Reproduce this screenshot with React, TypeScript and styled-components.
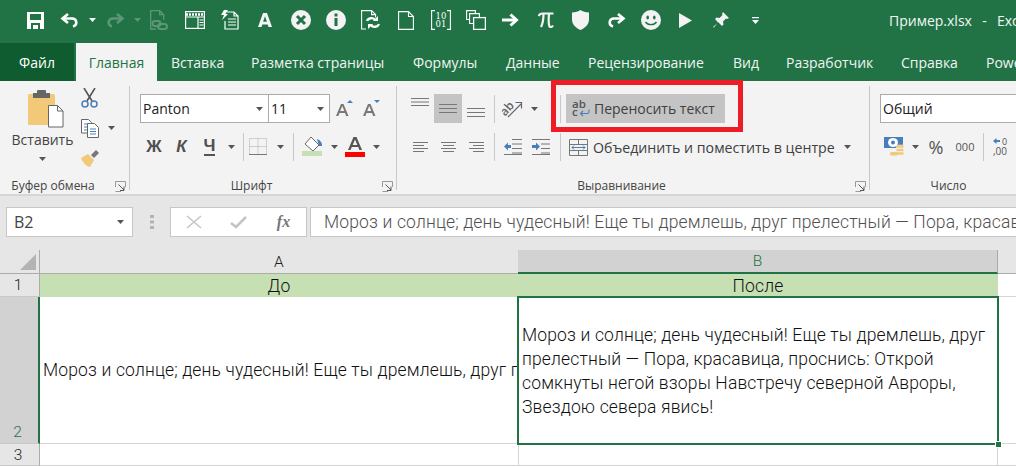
import styled, { createGlobalStyle } from 'styled-components';

const Reset = createGlobalStyle`
  html, body {
    margin: 0;
    width: 1016px;
    height: 466px;
    overflow: hidden;
    background: #fff;
    font-family: 'Open Sans', 'Liberation Sans', sans-serif;
  }
  * { box-sizing: border-box; }
`;

const GREEN = '#217346';
const BLUE = '#4a7ebb';
const TAN = '#f2c879';

const Page = styled.div`
  width: 1016px;
  height: 466px;
  overflow: hidden;
  display: flex;
  flex-direction: column;
  position: relative;
`;

const TitleBar = styled.div`
  height: 43px;
  flex: none;
  background: ${GREEN};
  display: flex;
  align-items: center;
  padding: 0 0 3px 18px;
  color: #fff;
`;

const QatBtn = styled.div<{ $w?: number; $dim?: boolean }>`
  width: ${(p) => p.$w ?? 35}px;
  height: 30px;
  flex: none;
  display: flex;
  align-items: center;
  justify-content: center;
  opacity: ${(p) => (p.$dim ? 0.26 : 1)};
`;

const FileName = styled.div`
  margin-left: 116px;
  flex: none;
  font-size: 14px;
  word-spacing: 1.5px;
  white-space: pre;
  color: #f2f7f4;
`;

const TabBar = styled.div`
  height: 38px;
  flex: none;
  background: ${GREEN};
  display: flex;
  overflow: hidden;
`;

const FileTab = styled.div`
  width: 74px;
  margin-right: 2px;
  background: #0e5c2f;
  color: #fff;
  font-size: 14px;
  display: flex;
  align-items: center;
  justify-content: center;
  flex: none;
`;

const ActiveTab = styled.div`
  width: 81px;
  background: #f3f3f3;
  color: ${GREEN};
  font-size: 14px;
  display: flex;
  align-items: center;
  justify-content: center;
  flex: none;
`;

const Tab = styled.div<{ $w: number }>`
  width: ${(p) => p.$w}px;
  flex: none;
  padding-left: 14px;
  color: #f0f5f2;
  font-size: 14px;
  display: flex;
  align-items: center;
  white-space: nowrap;
`;

const Ribbon = styled.div`
  height: 115px;
  flex: none;
  background: #f3f3f3;
  border-bottom: 2px solid #d6d6d6;
  display: flex;
  overflow: hidden;
  padding-top: 5px;
`;

const Group = styled.div<{ $w: number; $last?: boolean }>`
  width: ${(p) => p.$w}px;
  flex: none;
  height: 104px;
  display: flex;
  flex-direction: column;
  border-right: ${(p) => (p.$last ? 'none' : '1px solid #c8c8c8')};
`;

const GroupBody = styled.div<{ $left: number }>`
  flex: 1;
  display: flex;
  flex-direction: column;
  gap: 9px;
  padding: 8px 0 0 ${(p) => p.$left}px;
  min-height: 0;
`;

const GroupLabel = styled.div`
  height: 12px;
  margin-bottom: -2px;
  display: grid;
  grid-template-columns: 1fr auto 1fr;
  align-items: center;
  color: #444;
  font-size: 12px;
  line-height: 12px;
  white-space: nowrap;
  padding-right: 23px;
  svg { justify-self: end; grid-column: 3; margin-right: -20px; }
`;

const LabelText = styled.span`
  grid-column: 2;
`;

const Row = styled.div`
  height: 29px;
  display: flex;
  align-items: center;
  flex: none;
`;

const ClipboardBody = styled.div`
  flex: 1;
  display: flex;
  padding-left: 12px;
`;

const PasteCol = styled.div`
  width: 61px;
  display: flex;
  flex-direction: column;
  align-items: center;
  padding-top: 4px;
  color: #444;
  font-size: 14px;
  svg:first-child { margin-left: 7px; }
`;

const PasteLabel = styled.div`
  margin: 3px 0 8px;
  line-height: 18px;
`;

const SmallCol = styled.div`
  margin-left: 8px;
  padding-top: 2px;
  display: flex;
  flex-direction: column;
  gap: 10px;
`;

const SmallRow = styled.div`
  height: 20px;
  display: flex;
  align-items: center;
  gap: 9px;
`;

const Select = styled.div<{ $w: number; $overlap?: boolean }>`
  width: ${(p) => p.$w}px;
  height: 29px;
  flex: none;
  margin-left: ${(p) => (p.$overlap ? -1 : 0)}px;
  background: #fff;
  border: 1px solid #ababab;
  display: flex;
  align-items: center;
  justify-content: space-between;
  padding: 0 5px 0 2px;
  color: #222;
  font-size: 14px;
`;

const Tool = styled.div<{ $w: number; $on?: boolean; $up?: number; $down?: number }>`
  width: ${(p) => p.$w}px;
  height: 29px;
  flex: none;
  display: flex;
  align-items: center;
  justify-content: center;
  padding-bottom: ${(p) => p.$up ?? 0}px;
  padding-top: ${(p) => p.$down ?? 0}px;
  background: ${(p) => (p.$on ? '#c4c4c4' : 'transparent')};
  color: #555;
`;

const StyleLetter = styled.span<{ $italic?: boolean; $under?: boolean }>`
  font-family: 'Liberation Sans', sans-serif;
  font-weight: 700;
  font-size: 17px;
  font-style: ${(p) => (p.$italic ? 'italic' : 'normal')};
  border-bottom: ${(p) => (p.$under ? '2px solid #555' : 'none')};
  line-height: ${(p) => (p.$under ? '17px' : '20px')};
  color: #505050;
`;

const RibbonSep = styled.div<{ $before?: number }>`
  width: 1px;
  height: 28px;
  flex: none;
  margin-left: ${(p) => p.$before ?? 0}px;
  background: #c8c8c8;
`;

const WrapButton = styled.div`
  width: 159px;
  height: 29px;
  flex: none;
  margin-left: 5px;
  padding-left: 6px;
  background: #c4c4c4;
  display: flex;
  align-items: center;
  gap: 4px;
  color: #404040;
  font-size: 14px;
  white-space: nowrap;
`;

const MergeButton = styled.div`
  width: 290px;
  height: 29px;
  flex: none;
  margin-left: 5px;
  padding: 1px 5px 0 3px;
  display: flex;
  align-items: center;
  gap: 5px;
  color: #404040;
  font-size: 14.2px;
  white-space: nowrap;
  svg:last-child { margin-left: auto; }
`;

const Thousands = styled.span`
  font-size: 11px;
  color: #555;
`;

const Percent = styled.span`
  font-size: 18px;
  color: #555;
`;

const Highlight = styled.div`
  position: absolute;
  left: 551px;
  top: 80px;
  width: 192px;
  height: 52px;
  border: 5px solid #ee1c25;
  pointer-events: none;
`;

const FormulaBar = styled.div`
  height: 54px;
  flex: none;
  background: #e6e6e6;
  display: flex;
  padding: 11px 0 0 6px;
  overflow: hidden;
`;

const NameBox = styled.div`
  width: 127px;
  height: 30px;
  flex: none;
  background: #fff;
  border: 1px solid #c6c6c6;
  display: flex;
  align-items: center;
  justify-content: space-between;
  padding: 0 8px 0 7px;
  color: #444;
  font-size: 16px;
`;

const Grip = styled.div`
  width: 37px;
  height: 30px;
  flex: none;
  display: flex;
  align-items: center;
  justify-content: center;
`;

const FormulaButtons = styled.div`
  width: 137px;
  height: 30px;
  flex: none;
  background: #fff;
  border: 1px solid #c6c6c6;
  display: flex;
  align-items: center;
`;

const FxCell = styled.div`
  width: 45px;
  display: flex;
  justify-content: center;
  align-items: center;
  font-family: 'Liberation Serif', serif;
  font-style: italic;
  font-weight: 700;
  font-size: 16px;
  color: #777;
`;

const FormulaTools = styled.div`
  width: 45px;
  display: flex;
  align-items: center;
  justify-content: center;
`;

const FormulaInput = styled.div`
  flex: 1;
  min-width: 0;
  height: 30px;
  margin-left: 3px;
  background: #fff;
  border: 1px solid #c6c6c6;
  border-right: none;
  padding-left: 13px;
  display: flex;
  align-items: center;
  overflow: hidden;
  white-space: nowrap;
  color: #505050;
  font-family: 'Roboto', sans-serif;
  font-weight: 300;
  font-size: 17.5px;
  letter-spacing: 0.15px;
`;

const Sheet = styled.div`
  flex: 1;
  display: grid;
  grid-template-columns: 40px 478px 480px 18px;
  grid-template-rows: 24px 23px 147px 22px;
  font-family: 'Roboto', sans-serif;
  font-weight: 300;
  font-size: 17.5px;
  letter-spacing: 0.15px;
  color: #111;
`;

const Corner = styled.div`
  background: #e6e6e6;
  border-right: 1px solid #ababab;
  border-bottom: 1px solid #ababab;
  padding: 4px 0 0 20px;
`;

const ColHead = styled.div<{ $active?: boolean }>`
  background: ${(p) => (p.$active ? '#d2d2d2' : '#e6e6e6')};
  color: ${(p) => (p.$active ? GREEN : '#222')};
  border-bottom: ${(p) => (p.$active ? `2px solid ${GREEN}` : '1px solid #ababab')};
  border-right: ${(p) => (p.$active ? '1px solid #ababab' : 'none')};
  display: flex;
  align-items: center;
  justify-content: center;
  font-size: 15.5px;
`;

const RowHead = styled.div<{ $active?: boolean }>`
  background: ${(p) => (p.$active ? '#d2d2d2' : '#e6e6e6')};
  color: ${(p) => (p.$active ? GREEN : '#222')};
  border-right: ${(p) => (p.$active ? `2px solid ${GREEN}` : '1px solid #ababab')};
  border-bottom: 1px solid #c8c8c8;
  display: flex;
  align-items: ${(p) => (p.$active ? 'flex-end' : 'center')};
  justify-content: center;
  padding-right: 3px;
  font-size: 15.5px;
  line-height: 22px;
`;

const TitleCell = styled.div`
  background: #c6e0b4;
  display: flex;
  align-items: center;
  justify-content: center;
  overflow: hidden;
`;

const Cell = styled.div<{ $left?: boolean; $right?: boolean }>`
  background: #fff;
  border-bottom: 1px solid #d4d4d4;
  border-left: ${(p) => (p.$left ? '1px solid #d4d4d4' : 'none')};
  border-right: ${(p) => (p.$right ? '1px solid #d4d4d4' : 'none')};
  display: flex;
  align-items: center;
  padding-left: 3px;
  overflow: hidden;
  white-space: nowrap;
`;

const SelectedCell = styled.div`
  position: relative;
  z-index: 1;
  background: #fff;
  outline: 2px solid ${GREEN};
  outline-offset: -1px;
  display: flex;
  align-items: center;
  padding: 0 4px;
  line-height: 24px;
`;

const FillHandle = styled.div`
  position: absolute;
  right: -4px;
  bottom: -4px;
  width: 7px;
  height: 7px;
  background: ${GREEN};
  border: 1px solid #fff;
`;

const Caret = ({ color = '#555' }: { color?: string }) => (
  <svg width="7" height="4" viewBox="0 0 7 4"><path d="M0 0h7L3.5 4z" fill={color} /></svg>
);

const Launcher = () => (
  <svg width="11" height="11" viewBox="0 0 11 11" fill="none">
    <path d="M.5 6V.5H10.5V6M.5 10.500H6" stroke="#999" />
    <path d="M3.500 3.500 9 9M9 5.500V9.500H5" stroke="#555" />
  </svg>
);

const SaveIcon = () => (
  <svg width="17" height="17" viewBox="0 0 17 17">
    <path fillRule="evenodd" fill="#fff" d="M0 0h17v17H0zM3 2v6h11V2zM4 11v6h2v-4h5v4h2v-6z" />
  </svg>
);

const UndoIcon = ({ flip }: { flip?: boolean }) => (
  <svg width="20" height="15" viewBox="0 0 20 15" fill="none" stroke="#fff" strokeWidth="2.6" style={flip ? { transform: 'scaleX(-1)' } : undefined}>
    <path d="M8 1 2.500 5.500 8 10" />
    <path d="M3 5.500h9c5 0 6 6.500 1 8" />
  </svg>
);

const LinkDocIcon = () => (
  <svg width="19" height="20" viewBox="0 0 19 20" fill="none" stroke="#fff" strokeWidth="1.3">
    <path d="M6 19H.7V.7h9l4 4v5M9.700.7v4h4" />
    <rect x="2.500" y="11" width="8" height="5" rx="2.500" strokeWidth="2" />
    <rect x="8" y="14" width="9" height="5" rx="2.500" strokeWidth="2" />
  </svg>
);

const WindowIcon = () => (
  <svg width="20" height="18" viewBox="0 0 20 18" fill="none" stroke="#fff" strokeWidth="1.2">
    <rect x=".6" y=".6" width="18.800" height="16.800" />
    <path d="M1 3.500h18" strokeWidth="2.500" strokeDasharray="2 1" />
    <path d="M1 6h18M13 6.500v11M14.500 9h4M14.500 11.500h4M14.500 14h4" />
  </svg>
);

const QuickDocIcon = () => (
  <svg width="18" height="20" viewBox="0 0 18 20" fill="none" stroke="#fff" strokeWidth="1.2">
    <path d="M6 2h7l4 4v13H4v-8M13 2v4h4M7 9h8M7 12h8M7 15h8" />
    <path d="M3 0h4L4.500 4H7L1 10l2-5H0z" fill="#fff" stroke="none" />
  </svg>
);

const CircleX = () => (
  <svg width="20" height="20" viewBox="0 0 20 20">
    <circle cx="10" cy="10" r="10" fill="#f3f3f3" />
    <path d="M6 6l8 8M14 6l-8 8" stroke={GREEN} strokeWidth="3" />
  </svg>
);

const CircleInfo = () => (
  <svg width="20" height="20" viewBox="0 0 20 20">
    <circle cx="10" cy="10" r="10" fill="#f3f3f3" />
    <rect x="8.500" y="8" width="3" height="8" fill={GREEN} />
    <rect x="8.500" y="3.500" width="3" height="3" fill={GREEN} />
  </svg>
);

const RefreshDocIcon = () => (
  <svg width="19" height="20" viewBox="0 0 19 20" fill="none" stroke="#fff" strokeWidth="1.1">
    <path d="M5 19H.6V.6h10l4 4v3M10.600.6v4h4" />
    <path d="M6 11c1-3 6-4 8-1M18 14c-1 3-6 4-8 1" strokeWidth="2.300" />
    <path d="M12 11h5V6zM12 14H7v5z" fill="#fff" stroke="none" />
  </svg>
);

const BlankDocIcon = () => (
  <svg width="16" height="19" viewBox="0 0 16 19" fill="none" stroke="#fff" strokeWidth="1.1">
    <path d="M.6.600H10.500L15.400 5.500V18.400H.6zM10.500.6v4.900h4.900" />
  </svg>
);

const BinaryIcon = () => (
  <svg width="20" height="20" viewBox="0 0 20 20" fill="none">
    <path d="M4 .6H.6v18.800H4M16 .6h3.400v18.800H16" stroke="#fff" strokeWidth="1.1" />
    <text x="10" y="8.500" textAnchor="middle" fontSize="8.500" fill="#fff" fontFamily="'DejaVu Serif', serif">10</text>
    <text x="10" y="17" textAnchor="middle" fontSize="8.500" fill="#fff" fontFamily="'DejaVu Serif', serif">01</text>
  </svg>
);

const CopiesIcon = () => (
  <svg width="20" height="20" viewBox="0 0 20 20" fill="none" stroke="#fff" strokeWidth="1.1">
    <path d="M3 9.500H.6V.6h8.800V3" />
    <path d="M7 13.500H3.600V3.600h9.800V7" />
    <rect x="7.600" y="7.600" width="11.800" height="11.800" strokeWidth="1.300" />
  </svg>
);

const ArrowIcon = () => (
  <svg width="17" height="14" viewBox="0 0 17 14" fill="none" stroke="#fff">
    <path d="M0 7h14" strokeWidth="3" />
    <path d="M8.500 1.500 14.500 7l-6 5.500" strokeWidth="3" />
  </svg>
);

const ShieldIcon = () => (
  <svg width="17" height="20" viewBox="0 0 17 20">
    <path d="M8.500 0c2 1.500 5 2.500 8.500 2.500v7c0 5-4 8.500-8.500 10.500C4 18 0 14.500 0 9.500v-7C3.500 2.500 6.500 1.500 8.500 0z" fill="#f3f3f3" />
  </svg>
);

const SmileIcon = () => (
  <svg width="20" height="20" viewBox="0 0 20 20">
    <circle cx="10" cy="10" r="10" fill="#f3f3f3" />
    <ellipse cx="6.700" cy="7.500" rx="1.300" ry="2" fill={GREEN} />
    <ellipse cx="13.300" cy="7.500" rx="1.300" ry="2" fill={GREEN} />
    <path d="M4.500 12c2.500 3.500 8.500 3.500 11 0" fill="none" stroke={GREEN} strokeWidth="1.300" />
  </svg>
);

const PiIcon = () => (
  <svg width="16" height="16" viewBox="0 0 16 16" fill="none" stroke="#f3f3f3" strokeWidth="2.200">
    <path d="M.5 4c1-2 2-2.500 4-2.500H15.500" />
    <path d="M5.500 2C5.500 8 4.500 12 3 15M11 2c-.5 5-.5 10 .5 12.500 1 1 2.500.5 3.500-1" />
  </svg>
);

const PlayIcon = () => (
  <svg width="13" height="15" viewBox="0 0 13 15"><path d="M0 0l13 7.500L0 15z" fill="#f3f3f3" /></svg>
);

const PinIcon = () => (
  <svg width="16" height="16" viewBox="0 0 16 16" fill="#f3f3f3">
    <path d="M10 0l6 6-2 1-1-.5-3 3 .5 3-1.500 1.500L5 10 1 15.500 0 15l5-4.500L2 7l1.500-1.500 3 .5 3-3L9 2z" />
  </svg>
);

const QatMore = () => (
  <svg width="7" height="7" viewBox="0 0 7 7" fill="#fff"><path d="M0 0h7v1.300H0zM0 3h7L3.500 7z" /></svg>
);

const PasteIcon = () => (
  <svg width="36" height="38" viewBox="0 0 36 38">
    <rect x="0" y="4" width="27" height="31" rx="1.500" fill={TAN} />
    <rect x="9" y="0" width="9" height="4" rx="1" fill="#666" />
    <rect x="5" y="3" width="17" height="5" fill="#666" />
    <path d="M20.500 15.500h9l5.500 5.500v16H20.500z" fill="#fff" stroke="#666" />
    <path d="M29.500 15.500v5.500h5.500" fill="none" stroke="#666" />
  </svg>
);

const ScissorsIcon = () => (
  <svg width="17" height="20" viewBox="0 0 17 20" fill="none">
    <path d="M3 0 11 13M14 0 6 13" stroke="#555" strokeWidth="1.600" />
    <circle cx="4" cy="16" r="3" stroke={BLUE} strokeWidth="1.500" />
    <circle cx="13" cy="16" r="3" stroke={BLUE} strokeWidth="1.500" />
  </svg>
);

const CopyIcon = () => (
  <svg width="18" height="19" viewBox="0 0 18 19" fill="#fff" stroke="#666">
    <path d="M.5.500h7l3 3V14H.5z" />
    <path d="M6.500 4.500h7l4 4v10h-11z" />
    <path d="M3 5h4M3 8h3M3 11h3" stroke={BLUE} fill="none" />
    <path d="M9 10h6M9 12.500h6M9 15h6" stroke={BLUE} fill="none" />
  </svg>
);

const BrushIcon = () => (
  <svg width="18" height="17" viewBox="0 0 18 17">
    <path d="M0 8l7-4 6 6-4 7c-3 0-8-5-9-9z" fill={TAN} />
    <path d="M10 5l5-5 3 3-5 5z" fill="#777" />
  </svg>
);

const GrowIcon = ({ up }: { up?: boolean }) => (
  <svg width="18" height="17" viewBox="0 0 18 17">
    <path d="M1 16 6 4h2.500l5 12h-2.300l-1.200-3H4.500l-1.200 3zM5.200 11h4.100L7.250 6z" fill="#777" />
    <path d={up ? 'M12 3 15 0l3 3z' : 'M12 0h6l-3 3z'} fill={BLUE} />
  </svg>
);

const BordersIcon = () => (
  <svg width="18" height="17" viewBox="0 0 18 17" fill="none">
    <path d="M.5.500h17v16H.5zM9 .5v16M.5 8.500h17" stroke="#aaa" strokeDasharray="1 1" />
    <path d="M0 16.500h18" stroke="#777" />
  </svg>
);

const FillIcon = () => (
  <svg width="21" height="19" viewBox="0 0 21 19">
    <path d="M9 0l8 8-6 6-8-7z" fill="#fff" stroke="#666" />
    <path d="M15 2c3 1 5 3 5 7h-3z" fill={BLUE} />
    <rect x="0" y="14" width="20" height="5" fill="#c6e0b4" />
  </svg>
);

const FontColorIcon = () => (
  <svg width="20" height="20" viewBox="0 0 20 20">
    <path d="M3 13 8.500 0h3L17 13h-2.600l-1.200-3H6.800l-1.200 3zM7.700 8h4.600L10 2.500z" fill="#555" />
    <rect x="0" y="15" width="20" height="5" fill="#f00" />
  </svg>
);

const LinesIcon = ({ widths, align = 'center', step = 4 }: { widths: number[]; align?: 'left' | 'center' | 'right'; step?: number }) => {
  const max = Math.max(...widths);
  const h = (widths.length - 1) * step + 1;
  return (
    <svg width={max} height={h} viewBox={`0 0 ${max} ${h}`} stroke="#777">
      {widths.map((w, i) => {
        const x = align === 'left' ? 0 : align === 'right' ? max - w : (max - w) / 2;
        return <path key={i} d={`M${x} ${i * step + 0.5}h${w}`} />;
      })}
    </svg>
  );
};

const OrientationIcon = () => (
  <svg width="21" height="20" viewBox="0 0 21 20" fill="none">
    <text x="1" y="15" fontSize="12" fontWeight="600" fill="#666" transform="rotate(-48 5 14)" fontFamily="'Open Sans', sans-serif">ab</text>
    <path d="M6 18 19 5M13.500 3.500h6V9.500" stroke="#666" strokeWidth="1.200" />
  </svg>
);

const IndentIcon = ({ out }: { out?: boolean }) => (
  <svg width="18" height="16" viewBox="0 0 18 16" fill="none">
    <path d={out ? 'M8 .5h10M8 5h10M8 9.500h10M8 14h10M0 15.500h18' : 'M0 .5h18M9 5h9M9 9.500h9M9 14h9M0 15.500h18'} stroke="#777" />
    <path d={out ? 'M0 7.500l4-4v2.500h3v3H4v2.500z' : 'M8 7.500l-4-4v2.500H0v3h4v2.500z'} fill={BLUE} />
  </svg>
);

const WrapIcon = () => (
  <svg width="18" height="17" viewBox="0 0 18 17" fill="none">
    <text x="0" y="8" fontSize="11.500" fontWeight="600" fill="#555" fontFamily="'Open Sans', sans-serif">ab</text>
    <text x="0" y="16" fontSize="11.500" fontWeight="600" fill="#555" fontFamily="'Open Sans', sans-serif">c</text>
    <path d="M17 9.500v2.500c0 1-1 1.500-2 1.500H8.500M11 11l-2.500 2.500L11 16" stroke={BLUE} strokeWidth="1.100" />
  </svg>
);

const MergeIcon = () => (
  <svg width="19" height="17" viewBox="0 0 19 17" fill="none">
    <path d="M.5.500h18v16H.5zM.5 5.500h18M.5 11.500h18M9.500.5v5M9.500 11.500v5" stroke="#777" />
    <path d="M3 8.500h13M5 6.500l-2 2 2 2M14 6.500l2 2-2 2" stroke={BLUE} />
  </svg>
);

const MoneyIcon = () => (
  <svg width="20" height="20" viewBox="0 0 20 20">
    <rect width="19" height="11" fill={BLUE} />
    <ellipse cx="9" cy="5.500" rx="5" ry="4.500" fill="#fff" />
    <circle cx="9" cy="5.500" r="2" fill={BLUE} />
    <rect x="12" y="8" width="8" height="3" rx="1.500" fill={TAN} stroke="#f3f3f3" strokeWidth=".5" />
    <rect x="12" y="11.500" width="8" height="3" rx="1.500" fill={TAN} stroke="#f3f3f3" strokeWidth=".5" />
    <rect x="12" y="15" width="8" height="3" rx="1.500" fill={TAN} stroke="#f3f3f3" strokeWidth=".5" />
    <rect x="6" y="15" width="8" height="3.500" rx="1.500" fill={TAN} />
  </svg>
);

const DecimalIcon = () => (
  <svg width="18" height="19" viewBox="0 0 18 19" fill="none">
    <path d="M0 4l3.500-3v2H7v2H3.500v2z" fill={BLUE} />
    <text x="9" y="8" fontSize="9" fill="#555" fontFamily="'Open Sans', sans-serif">0</text>
    <text x="0" y="18" fontSize="10" fill="#555" fontFamily="'Open Sans', sans-serif">,00</text>
  </svg>
);

const CrossIcon = () => (
  <svg width="16" height="14" viewBox="0 0 16 14" stroke="#c4c4c4" strokeWidth="1.500"><path d="M1 1l14 12M15 1 1 13" /></svg>
);

const CheckIcon = () => (
  <svg width="17" height="13" viewBox="0 0 17 13" fill="none" stroke="#c4c4c4" strokeWidth="2.500"><path d="M1 7l5 4L16 1" /></svg>
);

const GripIcon = () => (
  <svg width="4" height="14" viewBox="0 0 4 14" fill="#b4b4b4">
    <rect width="4" height="3" /><rect y="5.500" width="4" height="3" /><rect y="11" width="4" height="3" />
  </svg>
);

const CornerTriangle = () => (
  <svg width="16" height="16" viewBox="0 0 16 16"><path d="M16 0v16H0z" fill="#b4b4b4" /></svg>
);

const poem = 'Мороз и солнце; день чудесный! Еще ты дремлешь, друг прелестный — Пора, красавица, проснись: Открой сомкнуты негой взоры Навстречу северной Авроры, Звездою севера явись!';

const tabs: [string, number][] = [
  ['Вставка', 80],
  ['Разметка страницы', 162],
  ['Формулы', 93],
  ['Данные', 82],
  ['Рецензирование', 145],
  ['Вид', 53],
  ['Разработчик', 115],
  ['Справка', 85],
  ['Power', 70],
];

function App() {
  return (
    <Page>
      <Reset />
      <TitleBar>
        <QatBtn><SaveIcon /></QatBtn>
        <QatBtn $w={34}><UndoIcon /></QatBtn>
        <QatBtn $w={10}><Caret color="#fff" /></QatBtn>
        <QatBtn $w={35} $dim><UndoIcon flip /></QatBtn>
        <QatBtn $w={10} $dim><Caret color="#fff" /></QatBtn>
        <QatBtn $dim><LinkDocIcon /></QatBtn>
        <QatBtn><WindowIcon /></QatBtn>
        <QatBtn><QuickDocIcon /></QatBtn>
        <QatBtn $w={36}><svg width="14" height="14" viewBox="0 0 14 14"><path fill="#f6f6f6" fillRule="evenodd" d="M0 14 5 0h4l5 14h-3.500l-.8-2.600H4.300L3.500 14zM5.100 8.800h3.800L7 3.200z" /></svg></QatBtn>
        <QatBtn><CircleX /></QatBtn>
        <QatBtn><CircleInfo /></QatBtn>
        <QatBtn><RefreshDocIcon /></QatBtn>
        <QatBtn><BlankDocIcon /></QatBtn>
        <QatBtn><BinaryIcon /></QatBtn>
        <QatBtn><CopiesIcon /></QatBtn>
        <QatBtn><ArrowIcon /></QatBtn>
        <QatBtn><PiIcon /></QatBtn>
        <QatBtn><ShieldIcon /></QatBtn>
        <QatBtn><UndoIcon flip /></QatBtn>
        <QatBtn><SmileIcon /></QatBtn>
        <QatBtn><PlayIcon /></QatBtn>
        <QatBtn><PinIcon /></QatBtn>
        <QatBtn><QatMore /></QatBtn>
        <FileName>Пример.xlsx  -  Excel</FileName>
      </TitleBar>

      <TabBar>
        <FileTab>Файл</FileTab>
        <ActiveTab>Главная</ActiveTab>
        {tabs.map(([name, w]) => (
          <Tab key={name} $w={w}>{name}</Tab>
        ))}
      </TabBar>

      <Ribbon>
        <Group $w={130}>
          <ClipboardBody>
            <PasteCol>
              <PasteIcon />
              <PasteLabel>Вставить</PasteLabel>
              <Caret />
            </PasteCol>
            <SmallCol>
              <SmallRow><ScissorsIcon /></SmallRow>
              <SmallRow><CopyIcon /><Caret /></SmallRow>
              <SmallRow><BrushIcon /></SmallRow>
            </SmallCol>
          </ClipboardBody>
          <GroupLabel><LabelText>Буфер обмена</LabelText><Launcher /></GroupLabel>
        </Group>

        <Group $w={267}>
          <GroupBody $left={10}>
            <Row>
              <Select $w={129}>Panton<Caret /></Select>
              <Select $w={62} $overlap>11<Caret /></Select>
              <Tool $w={28}><GrowIcon up /></Tool>
              <Tool $w={26}><GrowIcon /></Tool>
            </Row>
            <Row>
              <Tool $w={28}><StyleLetter>Ж</StyleLetter></Tool>
              <Tool $w={27}><StyleLetter $italic>К</StyleLetter></Tool>
              <Tool $w={29}><StyleLetter $under>Ч</StyleLetter></Tool>
              <Tool $w={14}><Caret /></Tool>
              <RibbonSep $before={5} />
              <Tool $w={27}><BordersIcon /></Tool>
              <Tool $w={19}><Caret /></Tool>
              <RibbonSep $before={3} />
              <Tool $w={36}><FillIcon /></Tool>
              <Tool $w={8}><Caret /></Tool>
              <Tool $w={34}><FontColorIcon /></Tool>
              <Tool $w={8}><Caret /></Tool>
            </Row>
          </GroupBody>
          <GroupLabel><LabelText>Шрифт</LabelText><Launcher /></GroupLabel>
        </Group>

        <Group $w={473}>
          <GroupBody $left={9}>
            <Row>
              <Tool $w={28} $up={13}><LinesIcon widths={[18, 18, 18]} step={3.5} /></Tool>
              <Tool $w={28} $on><LinesIcon widths={[18, 18, 18]} /></Tool>
              <Tool $w={28} $down={7}><LinesIcon widths={[18, 18, 18]} /></Tool>
              <RibbonSep $before={4} />
              <Tool $w={34}><OrientationIcon /></Tool>
              <Tool $w={10}><Caret /></Tool>
              <RibbonSep $before={21} />
              <WrapButton><WrapIcon />Переносить текст</WrapButton>
            </Row>
            <Row>
              <Tool $w={28}><LinesIcon widths={[15, 11, 15, 11]} step={3} align="left" /></Tool>
              <Tool $w={28}><LinesIcon widths={[15, 11, 15, 11]} step={3} /></Tool>
              <Tool $w={28}><LinesIcon widths={[15, 11, 15, 11]} step={3} align="right" /></Tool>
              <RibbonSep $before={4} />
              <Tool $w={36}><IndentIcon out /></Tool>
              <Tool $w={20}><IndentIcon /></Tool>
              <RibbonSep $before={9} />
              <MergeButton><MergeIcon />Объединить и поместить в центре<Caret /></MergeButton>
            </Row>
          </GroupBody>
          <GroupLabel><LabelText>Выравнивание</LabelText><Launcher /></GroupLabel>
        </Group>

        <Group $w={180} $last>
          <GroupBody $left={10}>
            <Row>
              <Select $w={160}>Общий</Select>
            </Row>
            <Row>
              <Tool $w={28}><MoneyIcon /></Tool>
              <Tool $w={14}><Caret /></Tool>
              <Tool $w={28}><Percent>%</Percent></Tool>
              <Tool $w={30}><Thousands>000</Thousands></Tool>
              <RibbonSep $before={3} />
              <Tool $w={36}><DecimalIcon /></Tool>
            </Row>
          </GroupBody>
          <GroupLabel><LabelText>Число</LabelText></GroupLabel>
        </Group>
      </Ribbon>

      <FormulaBar>
        <NameBox>B2<Caret /></NameBox>
        <Grip><GripIcon /></Grip>
        <FormulaButtons>
          <FormulaTools><CrossIcon /></FormulaTools>
          <FormulaTools><CheckIcon /></FormulaTools>
          <FxCell>fx</FxCell>
        </FormulaButtons>
        <FormulaInput>{poem}</FormulaInput>
      </FormulaBar>

      <Sheet>
        <Corner><CornerTriangle /></Corner>
        <ColHead>A</ColHead>
        <ColHead $active>B</ColHead>
        <ColHead />

        <RowHead>1</RowHead>
        <TitleCell>До</TitleCell>
        <TitleCell>После</TitleCell>
        <Cell />

        <RowHead $active>2</RowHead>
        <Cell>{poem}</Cell>
        <SelectedCell>
          {poem}
          <FillHandle />
        </SelectedCell>
        <Cell />

        <RowHead>3</RowHead>
        <Cell />
        <Cell $left $right />
        <Cell />
      </Sheet>

      <Highlight />
    </Page>
  );
}

export default App;
